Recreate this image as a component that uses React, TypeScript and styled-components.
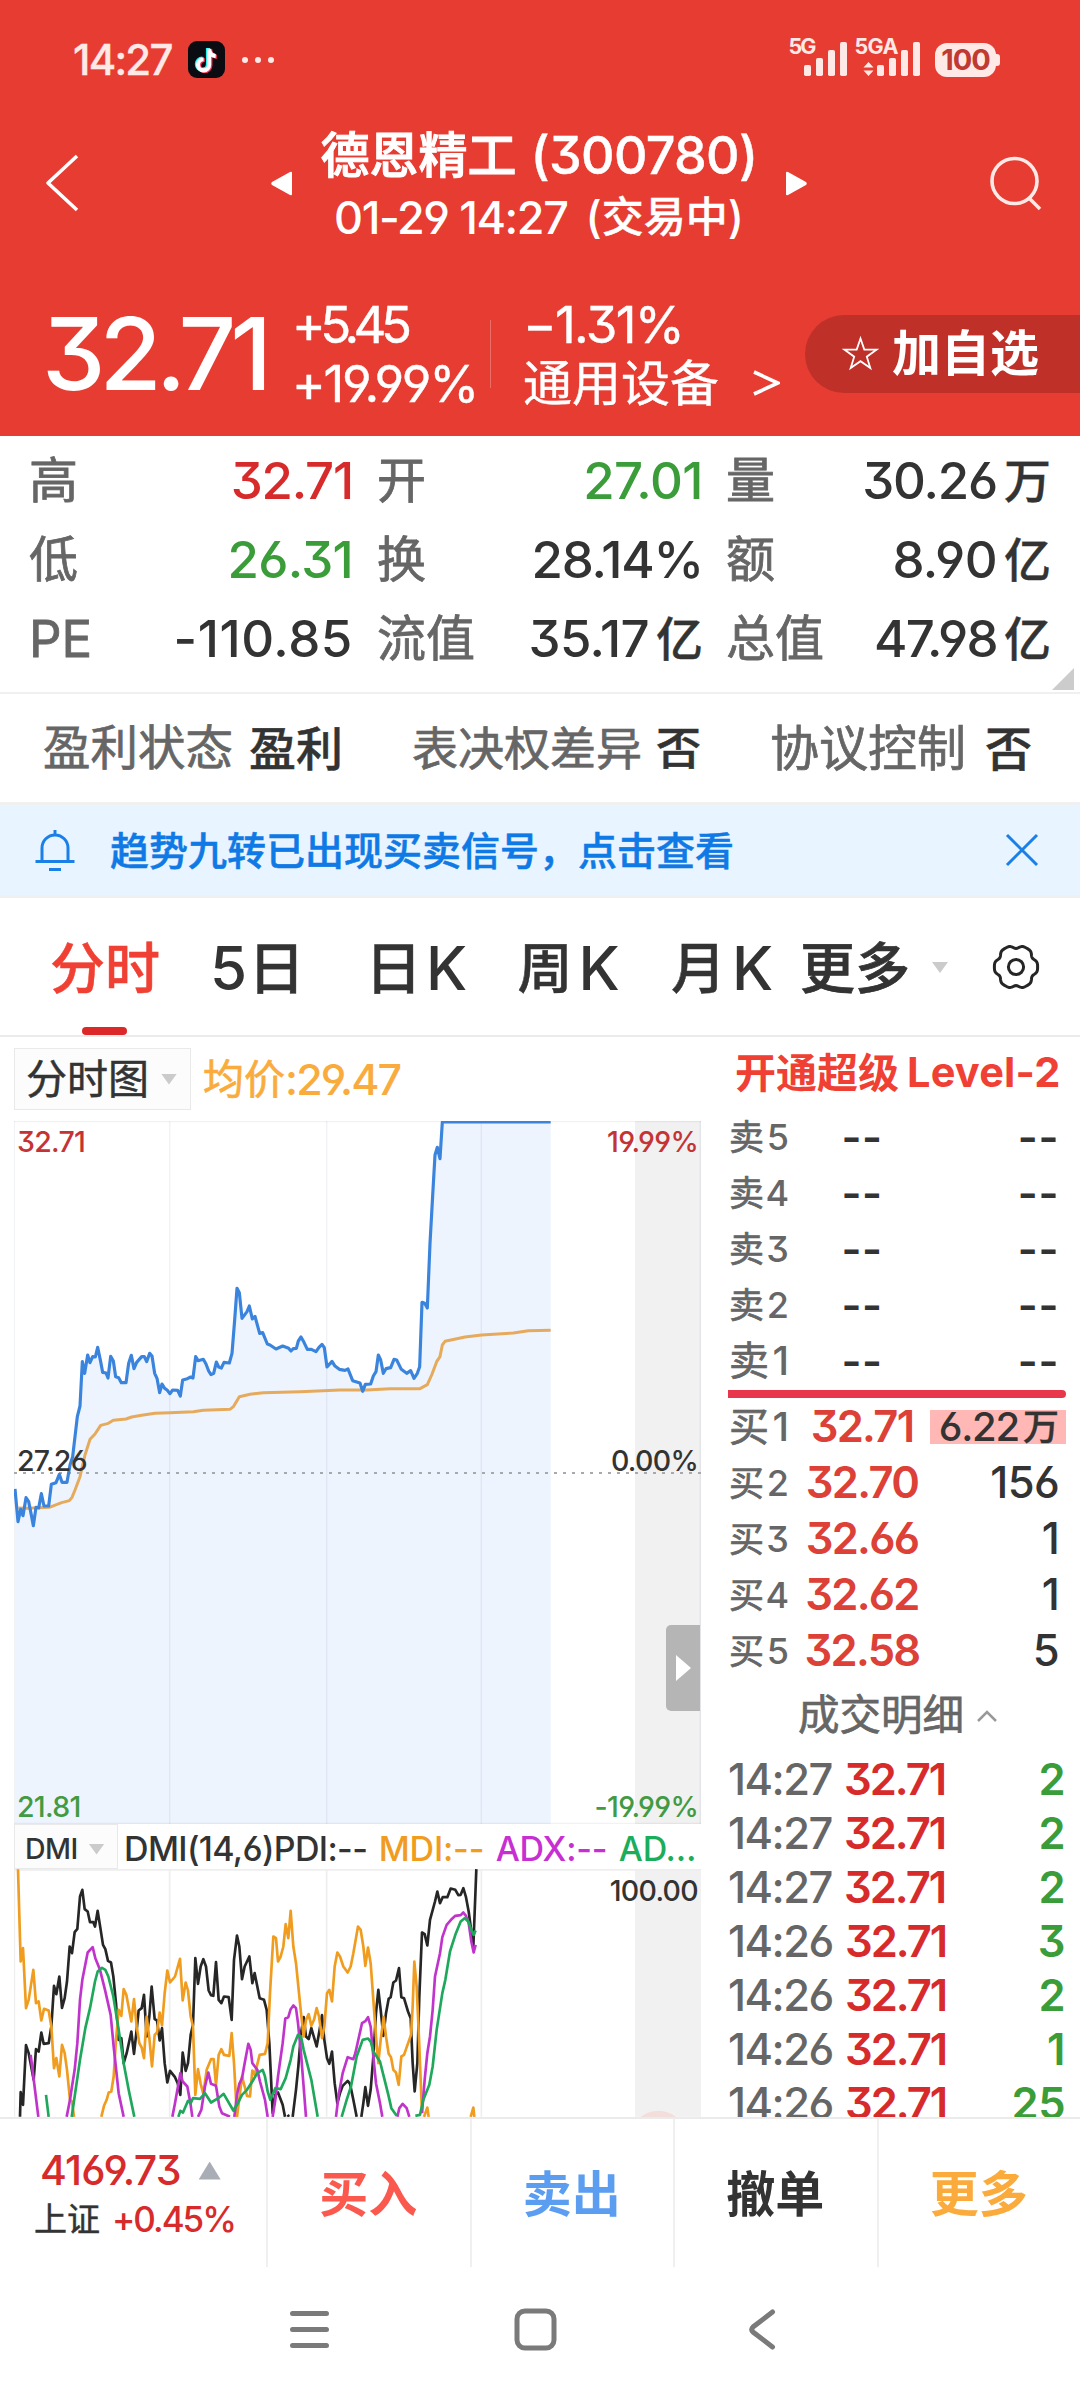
import React from 'react';
import styled, { createGlobalStyle } from 'styled-components';

const RED = '#d72b2b';
const GREEN = '#3a9d3a';
const DARK = '#333333';
const GRAY = '#666666';

const GlobalStyle = createGlobalStyle`
  html, body { margin: 0; padding: 0; background: #ffffff; }
  body {
    font-family: Inter, 'Noto Sans CJK SC', sans-serif;
    font-feature-settings: 'cv03', 'cv04', 'cv09', 'calt' 0;
  }
  * { box-sizing: border-box; }
  svg { display: block; flex: none; }
`;

const Screen = styled.div`
  width: 1080px;
  height: 2400px;
  display: flex;
  flex-direction: column;
  overflow: hidden;
  background: #ffffff;
  color: ${DARK};
`;

/* One run of text; size, weight, colour, tracking and extra stroke vary per use. */
const Label = styled.span<{ $s: number; $w?: number; $c?: string; $ls?: number; $ml?: number; $st?: number }>`
  flex: none;
  white-space: pre;
  line-height: 1;
  font-size: ${(p) => p.$s}px;
  font-weight: ${(p) => p.$w ?? 400};
  color: ${(p) => p.$c ?? 'inherit'};
  letter-spacing: ${(p) => p.$ls ?? 0}px;
  margin-left: ${(p) => p.$ml ?? 0}px;
  -webkit-text-stroke: ${(p) => p.$st ?? 0}px currentColor;
`;

const Spacer = styled.div`
  flex: 1;
`;

/* ---------- header ---------- */
const Header = styled.header`
  height: 436px;
  flex: none;
  display: flex;
  flex-direction: column;
  background: #e63c32;
  color: #ffffff;
`;

const StatusBar = styled.div`
  height: 119px;
  display: flex;
  align-items: center;
  padding: 0 84px 0 73px;
  color: #ffe9e7;
`;

const AppBadge = styled.div`
  width: 37px;
  height: 37px;
  margin-left: 16px;
  border-radius: 9px;
  background: #0b0b12;
  display: flex;
  align-items: center;
  justify-content: center;
`;

const Dots = styled.div`
  display: flex;
  gap: 7px;
  margin-left: 17px;
  i { width: 6px; height: 6px; border-radius: 50%; background: currentColor; }
`;

const Battery = styled.div`
  position: relative;
  width: 61px;
  height: 34px;
  margin-left: 14px;
  border-radius: 12px;
  background: #ffe9e7;
  display: flex;
  align-items: center;
  justify-content: center;
  &::after {
    content: '';
    position: absolute;
    right: -4px;
    top: 11px;
    width: 5px;
    height: 12px;
    border-radius: 0 3px 3px 0;
    background: #ffe9e7;
  }
`;

const TitleBar = styled.div`
  height: 128px;
  display: flex;
  align-items: center;
  padding: 0 37px 0 44px;
`;

const TitleGroup = styled.div`
  display: flex;
  align-items: center;
  gap: 30px;
  margin: 0 auto 0 191px;
`;

const TitleLines = styled.div`
  width: 434px;
  display: flex;
  flex-direction: column;
  align-items: center;
  gap: 13px;
  padding-top: 3px;
`;

const Line = styled.div`
  display: flex;
  align-items: center;
`;

const QuoteBar = styled.div`
  height: 189px;
  display: flex;
  align-items: center;
  padding: 24px 0 0 42px;
`;

const QuoteCol = styled.div<{ $w: number; $ml: number }>`
  width: ${(p) => p.$w}px;
  margin-left: ${(p) => p.$ml}px;
  display: flex;
  flex-direction: column;
  gap: 7px;
  flex: none;
`;

const QuotePrice = styled.div`
  width: 250px;
  flex: none;
  display: flex;
`;

const QuoteRow = styled.div`
  height: 52px;
  display: flex;
  align-items: center;
`;

const QuoteDivider = styled.div`
  width: 1px;
  height: 68px;
  background: rgba(255, 255, 255, 0.25);
`;

const AddButton = styled.div`
  width: 275px;
  height: 78px;
  flex: none;
  margin-left: auto;
  display: flex;
  align-items: center;
  padding-left: 37px;
  border-radius: 39px 0 0 39px;
  background: #bf3029;
`;

/* ---------- statistics ---------- */
const Stats = styled.section`
  position: relative;
  height: 258px;
  flex: none;
  display: grid;
  grid-template-columns: 324px 350px 348px;
  column-gap: 0;
  grid-auto-rows: 79px;
  padding: 5px 29px 0;
  border-bottom: 2px solid #f0f0f0;
`;

const Stat = styled.div<{ $pl: number }>`
  display: flex;
  align-items: center;
  justify-content: space-between;
  padding-left: ${(p) => p.$pl}px;
`;

const Corner = styled.div`
  position: absolute;
  right: 6px;
  bottom: 2px;
  border-left: 22px solid transparent;
  border-bottom: 22px solid #cccccc;
`;

const InfoRow = styled.section`
  height: 108px;
  flex: none;
  display: flex;
  align-items: center;
  justify-content: space-between;
  padding: 0 48px 0 43px;
`;

const Banner = styled.section`
  height: 96px;
  flex: none;
  display: flex;
  align-items: center;
  padding: 0 41px 0 33px;
  background: #e8f4ff;
  border-top: 3px solid #f0f0f0;
  border-bottom: 3px solid #f0f0f0;
`;

/* ---------- tabs ---------- */
const Tabs = styled.nav`
  height: 139px;
  flex: none;
  display: flex;
  align-items: center;
  padding-left: 50px;
  border-bottom: 2px solid #ebebeb;
`;

const Tab = styled.div<{ $w: number; $ml: number; $active?: boolean }>`
  position: relative;
  height: 100%;
  width: ${(p) => p.$w}px;
  margin-left: ${(p) => p.$ml}px;
  padding-top: 3px;
  flex: none;
  display: flex;
  align-items: center;
  justify-content: center;
  color: ${(p) => (p.$active ? '#f04034' : DARK)};
  &::after {
    content: '';
    display: ${(p) => (p.$active ? 'block' : 'none')};
    position: absolute;
    left: 32px;
    bottom: 0;
    width: 45px;
    height: 8px;
    border-radius: 4px;
    background: #dc2828;
  }
`;

const Caret = styled.i<{ $w: number; $h: number; $ml: number; $mt?: number }>`
  flex: none;
  width: ${(p) => p.$w}px;
  height: ${(p) => p.$h}px;
  margin-left: ${(p) => p.$ml}px;
  margin-top: ${(p) => p.$mt ?? 0}px;
  background: #cbcbcb;
  clip-path: polygon(0 0, 100% 0, 50% 100%);
`;

const CaretUp = styled(Caret)`
  background: #a9adb5;
  clip-path: polygon(0 100%, 100% 100%, 50% 0);
`;

/* ---------- main area ---------- */
const Main = styled.main`
  height: 1080px;
  flex: none;
  display: flex;
  overflow: hidden;
`;

const ChartColumn = styled.section`
  width: 701px;
  flex: none;
  padding-left: 14px;
  display: flex;
  flex-direction: column;
`;

const ChartToolbar = styled.div`
  height: 84px;
  flex: none;
  display: flex;
  align-items: center;
`;

const SelectBox = styled.div<{ $w: number; $h: number; $pl: number; $pt?: number }>`
  width: ${(p) => p.$w}px;
  height: ${(p) => p.$h}px;
  padding-left: ${(p) => p.$pl}px;
  padding-top: ${(p) => p.$pt ?? 0}px;
  flex: none;
  display: flex;
  align-items: center;
  background: #fcfcfc;
  border: 1px solid #e9e9e9;
`;

const ChartBox = styled.div<{ $h: number }>`
  position: relative;
  width: 687px;
  height: ${(p) => p.$h}px;
  flex: none;
`;

const AxisLabel = styled.span<{ $c: string; $top: number; $side: 'left' | 'right' }>`
  position: absolute;
  top: ${(p) => p.$top}px;
  ${(p) => p.$side}: 3px;
  line-height: 28px;
  font-size: 28.5px;
  font-weight: 550;
  letter-spacing: -0.7px;
  color: ${(p) => p.$c};
`;

const Handle = styled.div`
  position: absolute;
  right: 1px;
  top: 504px;
  width: 34px;
  height: 86px;
  border-radius: 5px 0 0 5px;
  background: #b5b5b5;
  display: flex;
  align-items: center;
  justify-content: center;
  &::before {
    content: '';
    border-left: 15px solid #ffffff;
    border-top: 13px solid transparent;
    border-bottom: 13px solid transparent;
  }
`;

const IndicatorBar = styled.div`
  height: 45px;
  flex: none;
  display: flex;
  align-items: center;
`;

const IndicatorValues = styled.div`
  display: flex;
  gap: 11.5px;
  padding: 5px 0 0 6px;
`;

const BookColumn = styled.section`
  width: 379px;
  flex: none;
  display: flex;
  flex-direction: column;
  padding: 0 14px 0 27px;
`;

const BookTitle = styled.div<{ $h: number; $pl: number }>`
  height: ${(p) => p.$h}px;
  padding-left: ${(p) => p.$pl}px;
  flex: none;
  display: flex;
  align-items: center;
`;

const BookRow = styled.div`
  height: 56px;
  flex: none;
  display: grid;
  grid-template-columns: 64px 140px 1fr;
  align-items: center;
`;

const Side = styled.div`
  display: flex;
  align-items: center;
  justify-content: space-between;
  padding-left: 1px;
  width: 61px;
`;

const PriceCell = styled.div`
  display: flex;
  justify-content: center;
`;

const QtyCell = styled.div<{ $hot?: boolean }>`
  height: 34px;
  display: flex;
  align-items: center;
  justify-content: flex-end;
  padding-right: 7px;
  margin-left: -2px;
  background: ${(p) => (p.$hot ? '#ffb8b5' : 'transparent')};
`;

const BookRule = styled.div`
  height: 8px;
  margin: 1px 0;
  flex: none;
  border-radius: 0 4px 4px 0;
  background: #e8364a;
`;

const TradeRow = styled.div`
  height: 54px;
  flex: none;
  display: flex;
  align-items: center;
  padding: 0 1px 0 0;
`;

/* ---------- bottom ---------- */
const ActionBar = styled.footer`
  height: 150px;
  flex: none;
  display: flex;
  border-top: 2px solid #ebebeb;
`;

const IndexCell = styled.div`
  width: 266px;
  flex: none;
  display: flex;
  flex-direction: column;
  gap: 11px;
  padding: 31px 0 0 34px;
`;

const Action = styled.div`
  flex: 1;
  display: flex;
  align-items: center;
  justify-content: center;
  padding: 3px 1px 0 0;
  border-left: 2px solid #f0f0f0;
`;

const SystemNav = styled.div`
  flex: 1;
  display: flex;
  align-items: flex-start;
  padding: 40px 0 0 288px;
`;

/* ---------- chart data ---------- */
const PRICE =
  '45,1167 54,1265 62,1228 69,1247 78,1193 86,1205 93,1240 100,1277 108,1222 116,1224 124,1181 132,1218 146,1218 154,1153 168,1148 178,1123 186,1147 201,1147 210,1095 218,1070 232,950 240,918 247,785 254,820 263,765 270,788 278,770 286,771 293,742 302,785 308,817 318,819 324,834 332,769 340,783 347,830 356,833 364,848 378,848 386,790 394,766 402,806 410,787 425,770 433,770 440,785 449,760 456,768 464,820 471,835 479,878 486,852 494,865 502,871 510,881 518,870 533,871 541,888 548,840 562,836 572,831 579,834 587,770 594,782 610,778 618,792 626,813 633,824 641,820 649,786 656,801 664,804 672,787 688,789 696,760 704,660 711,565 718,578 726,655 741,635 748,618 757,657 765,649 779,700 788,698 802,732 810,735 828,747 848,738 866,745 873,753 880,746 889,745 895,723 903,711 912,727 922,748 934,748 948,755 957,742 966,733 973,743 981,801 996,784 1004,797 1018,808 1035,811 1044,807 1058,842 1080,849 1088,874 1096,853 1112,852 1120,828 1128,815 1135,765 1142,780 1150,820 1158,806 1172,803 1182,778 1190,780 1204,808 1220,820 1232,812 1242,835 1252,820 1259,800 1266,607 1274,610 1282,624 1290,430 1298,287 1305,165 1312,142 1320,176 1327,66 1652,66';

const AVERAGE =
  '55,1224 80,1225 100,1224 148,1222 185,1208 208,1202 216,1192 225,1170 240,1130 255,1065 270,1018 285,1002 302,976 325,970 340,961 378,957 395,951 425,946 465,940 510,938 580,935 610,931 690,928 700,920 718,890 750,883 790,878 900,875 1020,870 1100,870 1170,866 1260,866 1282,854 1295,825 1310,785 1320,770 1327,735 1335,724 1395,711 1445,705 1540,699 1585,692 1652,691';

const PDI = [
  '60,1011 62,937 69,975 78,796 86,820 101,900 108,808 116,815 124,758 131,792 146,790 154,740 162,618 169,643 178,590 186,684 194,655 201,605 209,500 216,520 224,457 232,447 240,350 247,330 254,388 263,395 270,427 280,427 285,440 293,393 302,450 309,495 316,508 324,543 333,548 340,590 348,670 356,780 364,775 371,850 380,820 394,755 402,822 410,750 416,692 425,685 432,645 440,770 448,710 455,620 464,718 471,722 479,782 486,745 494,850 502,908 510,873 525,892 533,910 541,945 548,818 557,873 564,850 572,765 579,735 586,535 594,612 602,560 610,538 618,560 626,632 633,646 640,648 648,547 656,660 664,670 672,650 686,652 695,720 702,540 711,467 718,500 726,598 734,560 748,530 757,610 764,580 779,655 792,660 800,690 808,790 818,1000 826,945 834,938 848,975 855,1011',
  '863,1005 867,1011',
  '878,1011 888,930 895,860 903,760 911,712 918,770 926,778 934,745 950,800 957,760 966,706 973,780 981,835 988,852 996,815 1004,910 1012,970 1020,940 1028,918 1043,903 1050,912 1060,960 1070,1011',
  '1084,1011 1090,970 1096,922 1104,978 1112,930 1120,830 1128,700 1135,630 1142,690 1150,768 1158,700 1166,657 1172,652 1180,608 1188,602 1197,565 1204,652 1212,655 1224,695 1232,715 1238,850 1244,935 1252,850 1258,650 1266,458 1274,463 1282,497 1290,420 1305,365 1312,335 1320,370 1328,352 1342,352 1352,326 1366,330 1375,346 1382,345 1390,325 1398,352 1406,395 1412,440 1420,500 1429,268',
];

const MDI = [
  '54,268 62,545 69,505 78,685 86,660 100,570 108,670 116,665 124,722 132,687 146,692 154,740 162,865 169,835 178,890 186,795 194,820 201,870 210,960 216,965 222,1011',
  '304,1011 312,978 320,960 326,938 334,935 341,890 348,780 356,690 364,708 371,628 379,645 394,725 402,658 410,740 418,790 425,803 432,835 440,710 448,775 456,860 464,765 471,758 479,698 486,737 494,640 502,572 510,608 525,590 540,537 548,662 557,608 564,632 572,710 579,740 586,945 594,868 602,912 610,942 620,870 633,838 641,838 648,915 656,825 664,808 672,825 688,828 695,760 702,850 711,1011 718,955 726,890 734,920 741,948 750,950 757,872 764,885 779,825 795,822 803,790 810,640 820,470 828,475 834,545 842,530 850,500 857,433 865,475 872,393 880,500 888,550 903,700 911,770 918,720 926,703 934,738 942,720 950,685 957,710 966,775 973,740 981,640 988,630 996,665 1004,560 1012,518 1020,530 1030,560 1043,578 1052,560 1060,520 1074,440 1082,450 1090,500 1096,558 1104,503 1112,550 1120,660 1128,770 1135,850 1142,780 1151,712 1158,770 1166,822 1173,832 1180,870 1188,878 1196,915 1204,830 1212,825 1233,765 1238,680 1243,545 1250,620 1258,800 1266,1000',
  '1272,1011 1282,983 1286,1011',
  '1412,1011 1420,983 1423,1011',
];

const ADX = [
  '92,825 100,890 115,1011',
  '200,1011 210,960 216,920 224,870 232,790 240,660 247,600 263,518 278,502 286,535 300,570 315,630 332,705 341,800 356,940 371,1011',
  '517,1011 525,970 541,880 548,905 562,920 572,975 577,1011',
  '594,1011 604,990 615,920 625,878 633,912 648,918 658,980 666,1000 690,1011',
  '703,1011 711,945 718,912 726,895 734,850 745,792 752,810 757,850 772,870 780,905 795,960 803,1011',
  '818,1011 826,960 834,890 848,790 856,716 865,712 872,688 880,677 888,685 894,730 903,820 918,1011',
  '1008,1011 1016,945 1028,880 1043,832 1060,838 1066,820 1086,730 1096,724 1104,712 1112,740 1120,830 1128,910 1140,970 1147,1011',
  '1192,1011 1198,985 1208,972 1220,985 1228,1011',
  '1266,1000 1274,900 1282,820 1290,770 1298,690 1305,590 1320,520 1327,472 1340,435 1353,420 1366,408 1382,406 1390,398 1398,408 1406,430 1414,485 1421,518 1427,495',
];

const ADXR = [
  '138,945 146,1011',
  '215,1011 224,950 240,840 256,745 270,685 285,605 293,575 306,564 316,570 325,590 340,650 356,750 371,850 386,930 403,1011',
  '535,1011 541,993 549,998 564,963 572,970 579,955 600,957 615,940 633,968 655,955 671,942 700,992 711,975 726,945 741,930 757,905 772,880 788,870 795,890 803,935 811,960 826,925 842,928 857,895 872,840 880,800 894,765 903,770 911,810 934,900 953,1011',
  '1025,1011 1040,960 1053,920 1070,830 1088,780 1104,776 1112,785 1120,815 1140,845 1150,885 1165,945 1174,985 1190,1008',
  '1246,1008 1260,1005 1270,960 1288,915 1298,860 1310,750 1327,640 1336,600 1350,515 1366,465 1382,425 1394,415 1405,425 1414,450 1421,465 1427,452',
];

const GRID_X = [509, 980, 1444];

const Series: React.FC<{ runs: string[]; color: string }> = ({ runs, color }) => (
  <g fill="none" stroke={color} strokeWidth={8} strokeLinejoin="round">
    {runs.map((points) => (
      <polyline key={points} points={points} />
    ))}
  </g>
);

const PriceChart: React.FC = () => (
  <svg width="687" height="703" viewBox="42 63 2061 2109">
    <rect x="1905" y="63" width="198" height="2109" fill="#f1f1f1" />
    <polygon points={`45,2172 ${PRICE} 1652,2172`} fill="#edf4fe" />
    <g stroke="#0a1e50" strokeOpacity="0.06" strokeWidth="4">
      {GRID_X.map((x) => (
        <line key={x} x1={x} x2={x} y1="63" y2="2172" />
      ))}
      <line x1="43" x2="43" y1="63" y2="2172" />
      <line x1="2101" x2="2101" y1="63" y2="2172" />
      <line x1="42" x2="2103" y1="65" y2="65" />
      <line x1="42" x2="2103" y1="2170" y2="2170" />
    </g>
    <line x1="42" x2="2103" y1="1119" y2="1119" stroke="#a6a9ae" strokeWidth="6" strokeDasharray="9 18" />
    <polyline points={AVERAGE} fill="none" stroke="#e6aa5c" strokeWidth="9" strokeLinejoin="round" />
    <polyline points={PRICE} fill="none" stroke="#3a84dd" strokeWidth="9.5" strokeLinejoin="round" />
  </svg>
);

const DmiChart: React.FC = () => (
  <svg width="687" height="248" viewBox="42 268 2061 743">
    <rect x="1905" y="268" width="198" height="743" fill="#f1f1f1" />
    <g stroke="#eeeeef" strokeWidth="5">
      {GRID_X.map((x) => (
        <line key={x} x1={x} x2={x} y1="268" y2="1011" />
      ))}
      <line x1="43" x2="43" y1="268" y2="1011" />
      <line x1="42" x2="2103" y1="270" y2="270" />
    </g>
    <ellipse cx="1975" cy="1055" rx="76" ry="62" fill="#f3dedc" />
    <Series runs={PDI} color="#262626" />
    <Series runs={MDI} color="#f09c1e" />
    <Series runs={ADX} color="#c034cc" />
    <Series runs={ADXR} color="#1fa85c" />
  </svg>
);

/* Six soft lobes around the hub. */
const gearOutline = Array.from({ length: 120 }, (_, i) => {
  const t = (i / 120) * Math.PI * 2;
  const r = 20.6 + 1.5 * Math.cos(6 * t) - 0.5 * Math.cos(12 * t);
  return `${(24 + r * Math.cos(t)).toFixed(2)},${(24 + r * Math.sin(t)).toFixed(2)}`;
}).join(' ');

const Gear = styled.svg`
  margin-left: 44px;
`;

const GearIcon: React.FC = () => (
  <Gear width="48" height="48" viewBox="0 0 48 48" fill="none" stroke="#262626" strokeWidth="3">
    <polygon points={gearOutline} strokeLinejoin="round" />
    <circle cx="24" cy="24" r="7.6" />
  </Gear>
);

const ArrowRight = styled.svg`
  margin-left: 34px;
`;

const ChevronUp = styled.svg`
  margin-left: 13px;
`;

const NOTE = 'M13.2 3v13.4a4.6 4.6 0 1 1-4.6-4.6M13.2 4c.4 3 2.4 5 5.4 5.2';

const SignalIcons: React.FC = () => (
  <svg width="133" height="69" viewBox="789 25 133 69" fill="#ffe9e7" fontFamily="Inter" fontWeight="700" fontSize="21.500">
    <text x="789.500" y="53.5" textLength="28">5G</text>
    <text x="855.500" y="53.5" textLength="44">5GA</text>
    {[65, 58, 50, 42].map((y, i) => (
      <rect key={y} x={805 + i * 12} y={y} width="7" height={76 - y} rx="1.8" />
    ))}
    {[65, 58, 50, 42].map((y, i) => (
      <rect key={y} x={878 + i * 12} y={y} width="7" height={76 - y} rx="1.8" />
    ))}
    <path d="M864.500 67.500 L869.500 62 L874.500 67.500z M864.500 70.500 L869.500 76 L874.500 70.500z" />
  </svg>
);

/* ---------- table data ---------- */
type StatItem = { label: string; value: string; unit?: string; color?: string; ls?: number };

const STATS: StatItem[] = [
  { label: '高', value: '32.71', color: RED },
  { label: '开', value: '27.01', color: GREEN, ls: -0.5 },
  { label: '量', value: '30.26', unit: '万' },
  { label: '低', value: '26.31', color: GREEN, ls: -0.7 },
  { label: '换', value: '28.14%' },
  { label: '额', value: '8.90', unit: '亿', ls: -0.6 },
  { label: 'PE', value: '-110.85', ls: 0.6 },
  { label: '流值', value: '35.17', unit: '亿', ls: -0.6 },
  { label: '总值', value: '47.98', unit: '亿', ls: -1.7 },
];

const SELLS = [5, 4, 3, 2, 1];
const BUYS: [number, string, string, string?][] = [
  [1, '32.71', '6.22', '万'],
  [2, '32.70', '156'],
  [3, '32.66', '1'],
  [4, '32.62', '1'],
  [5, '32.58', '5'],
];
const TRADES: [string, string][] = [
  ['14:27', '2'],
  ['14:27', '2'],
  ['14:27', '2'],
  ['14:26', '3'],
  ['14:26', '2'],
  ['14:26', '1'],
  ['14:26', '25'],
];

const SideLabel: React.FC<{ text: string; level: number }> = ({ text, level }) => (
  <Side>
    <Label $s={level === 1 ? 40 : 35} $c={GRAY} $st={0.7}>{text}</Label>
    <Label $s={level === 1 ? 40 : 36} $c={GRAY} $w={500}>{level}</Label>
  </Side>
);

export default function App() {
  return (
    <Screen>
      <GlobalStyle />
      <Header>
        <StatusBar>
          <Label $s={42} $w={500} $ls={-1.8} $st={0.3}>14:27</Label>
          <AppBadge>
            <svg width="27" height="29" viewBox="0 0 22 24" fill="none" strokeWidth="3.4">
              <path d={NOTE} stroke="#25f4ee" transform="translate(-1 -0.6)" />
              <path d={NOTE} stroke="#fe2c55" transform="translate(1 0.6)" />
              <path d={NOTE} stroke="#ffffff" />
            </svg>
          </AppBadge>
          <Dots><i /><i /><i /></Dots>
          <Spacer />
          <SignalIcons />
          <Battery>
            <Label $s={29} $w={700} $c="#bf3a33" $ls={-1}>100</Label>
          </Battery>
        </StatusBar>

        <TitleBar>
          <svg width="36" height="60" viewBox="0 0 36 60" fill="none" stroke="#fff" strokeWidth="3.6">
            <path d="M33 3 L4 30 L33 57" strokeLinejoin="round" />
          </svg>
          <TitleGroup>
            <svg width="21" height="25" viewBox="0 0 21 25" fill="#fff"><path d="M21 2v21q0 2-2 1L1 14q-1.500-1.500 0-3L19 1q2-1 2 1z" /></svg>
            <TitleLines>
              <Line>
                <Label $s={49} $w={500} $st={1}>德恩精工</Label>
                <Label $s={52} $w={500} $ls={-0.7} $ml={14} $st={0.4}>(300780)</Label>
              </Line>
              <Line>
                <Label $s={45} $w={500} $ls={-1.4}>01-29 14:27</Label>
                <Label $s={44} $w={450} $ml={18}>(</Label>
                <Label $s={42} $w={450} $st={0.4}>交易中</Label>
                <Label $s={44} $w={450}>)</Label>
              </Line>
            </TitleLines>
            <svg width="21" height="25" viewBox="0 0 21 25" fill="#fff"><path d="M0 2v21q0 2 2 1L20 14q1.500-1.500 0-3L2 1q-2-1-2 1z" /></svg>
          </TitleGroup>
          <svg width="54" height="56" viewBox="0 0 54 56" fill="none" stroke="#ffe9e7" strokeWidth="3.6">
            <circle cx="25.500" cy="26" r="22.500" />
            <path d="M40 43 L51 54" />
          </svg>
        </TitleBar>

        <QuoteBar>
          <QuotePrice><Label $s={101} $w={470} $ls={-6}>32.71</Label></QuotePrice>
          <QuoteCol $w={198} $ml={0}>
            <QuoteRow><Label $s={51} $ls={-5.500} $st={0.4}>+5.45</Label></QuoteRow>
            <QuoteRow><Label $s={51} $ls={-2.2} $st={0.4}>+19.99%</Label></QuoteRow>
          </QuoteCol>
          <QuoteDivider />
          <QuoteCol $w={240} $ml={32}>
            <QuoteRow><Label $s={51} $ls={-1.700} $st={0.4}>−1.31%</Label></QuoteRow>
            <QuoteRow>
              <Label $s={49} $st={0.4}>通用设备</Label>
              <ArrowRight width="27" height="26" viewBox="0 0 27 26" fill="none" stroke="#fff" strokeWidth="3.600">
                <path d="M1 2 L25 13 L1 24" />
              </ArrowRight>
            </QuoteRow>
          </QuoteCol>
          <AddButton>
            <svg width="37" height="36" viewBox="0 0 37 36" fill="none" stroke="#fff" strokeWidth="1.8">
              <path d="M18.500 2.500 L22.300 13.500 L34.500 13.700 L24.800 20.700 L28.300 32 L18.500 25.200 L8.700 32 L12.200 20.700 L2.500 13.700 L14.700 13.500z" />
            </svg>
            <Label $s={49} $w={700} $ml={13}>加自选</Label>
          </AddButton>
        </QuoteBar>
      </Header>

      <Stats>
        {STATS.map((s, i) => (
          <Stat key={s.label} $pl={[0, 24, 23][i % 3]}>
            <Label $s={s.label === 'PE' ? 51 : 49} $c={GRAY} $st={0.8}>{s.label}</Label>
            <Line>
              <Label $s={51} $w={530} $c={s.color ?? DARK} $ls={s.ls ?? -1.2}>{s.value}</Label>
              {s.unit && <Label $s={47} $w={450} $ml={7} $st={0.4}>{s.unit}</Label>}
            </Line>
          </Stat>
        ))}
        <Corner />
      </Stats>

      <InfoRow>
        <Line>
          <Label $s={47.500} $c={GRAY} $st={0.7}>盈利状态</Label>
          <Label $s={47} $w={500} $ml={16} $st={0.5}>盈利</Label>
        </Line>
        <Line>
          <Label $s={46} $c={GRAY} $st={0.7}>表决权差异</Label>
          <Label $s={45} $w={500} $ml={14} $st={0.5}>否</Label>
        </Line>
        <Line>
          <Label $s={49} $c={GRAY} $st={0.7}>协议控制</Label>
          <Label $s={47} $w={500} $ml={19} $st={0.5}>否</Label>
        </Line>
      </InfoRow>

      <Banner>
        <svg width="44" height="44" viewBox="0 0 44 44" fill="none" stroke="#1a7fe6" strokeWidth="3">
          <path d="M22 2v5M9 33V20a13 13 0 0 1 26 0v13M2.500 33.500h39M16 41.500h12" />
        </svg>
        <Label $s={39} $w={500} $c="#0f7ae5" $ml={33} $st={0.5}>趋势九转已出现买卖信号，点击查看</Label>
        <Spacer />
        <svg width="34" height="34" viewBox="0 0 34 34" fill="none" stroke="#1a7fe6" strokeWidth="3">
          <path d="M2 2 L32 32 M32 2 L2 32" />
        </svg>
      </Banner>

      <Tabs>
        <Tab $w={110} $ml={0} $active><Label $s={55} $w={500} $st={0.5}>分时</Label></Tab>
        <Tab $w={87} $ml={54}><Label $s={60} $w={530} $ls={-1}>5</Label><Label $s={57} $w={500} $ml={2} $st={0.4}>日</Label></Tab>
        <Tab $w={94} $ml={68}><Label $s={57} $w={500} $st={0.4}>日</Label><Label $s={60} $w={530} $ml={4}>K</Label></Tab>
        <Tab $w={101} $ml={55}><Label $s={55} $w={500} $st={0.5}>周</Label><Label $s={60} $w={530} $ml={6}>K</Label></Tab>
        <Tab $w={98} $ml={54}><Label $s={55} $w={500} $st={0.5}>月</Label><Label $s={60} $w={530} $ml={6}>K</Label></Tab>
        <Tab $w={108} $ml={30}><Label $s={55} $w={500} $st={0.7}>更多</Label></Tab>
        <Caret $w={16} $h={11} $ml={23} $mt={2} />
        <GearIcon />
      </Tabs>

      <Main>
        <ChartColumn>
          <ChartToolbar>
            <SelectBox $w={177} $h={62} $pl={11}>
              <Label $s={41} $st={0.5}>分时图</Label>
              <Caret $w={16} $h={11} $ml={12} />
            </SelectBox>
            <Label $s={41} $c="#f9ac3d" $ml={12} $st={0.7}>均价</Label>
            <Label $s={43} $w={480} $c="#f9ac3d" $ls={-1.9}>:29.47</Label>
          </ChartToolbar>
          <ChartBox $h={703}>
            <PriceChart />
            <AxisLabel $c="#c43434" $top={7} $side="left">32.71</AxisLabel>
            <AxisLabel $c={DARK} $top={326} $side="left">27.26</AxisLabel>
            <AxisLabel $c="#429a42" $top={672} $side="left">21.81</AxisLabel>
            <AxisLabel $c="#c43434" $top={7} $side="right">19.99%</AxisLabel>
            <AxisLabel $c={DARK} $top={326} $side="right">0.00%</AxisLabel>
            <AxisLabel $c="#429a42" $top={672} $side="right">-19.99%</AxisLabel>
            <Handle />
          </ChartBox>
          <IndicatorBar>
            <SelectBox $w={104} $h={45} $pl={10} $pt={5}>
              <Label $s={28.500} $ls={-0.6} $w={450}>DMI</Label>
              <Caret $w={16} $h={11} $ml={11} />
            </SelectBox>
            <IndicatorValues>
              <Label $s={34} $w={530} $ls={-0.65}>DMI(14,6)PDI:--</Label>
              <Label $s={34} $w={530} $ls={-0.2} $c="#f09c1e">MDI:--</Label>
              <Label $s={34} $w={530} $ls={-0.2} $c="#c82fd2">ADX:--</Label>
              <Label $s={34} $w={530} $ls={-0.2} $c="#1aad5c">AD…</Label>
            </IndicatorValues>
          </IndicatorBar>
          <ChartBox $h={248}>
            <DmiChart />
            <AxisLabel $c={DARK} $top={8} $side="right">100.00</AxisLabel>
          </ChartBox>
        </ChartColumn>

        <BookColumn>
          <BookTitle $h={72} $pl={7}>
            <Label $s={41} $w={700} $c="#f04034">开通超级</Label>
            <Label $s={41.500} $w={650} $c="#f04034" $ls={0.2} $ml={8}>Level-2</Label>
          </BookTitle>
          {SELLS.map((level) => (
            <BookRow key={level}>
              <SideLabel text="卖" level={level} />
              <PriceCell><Label $s={43} $w={600} $ls={0.600}>--</Label></PriceCell>
              <QtyCell><Label $s={43} $w={600} $ls={0.600}>--</Label></QtyCell>
            </BookRow>
          ))}
          <BookRule />
          {BUYS.map(([level, price, qty, unit]) => (
            <BookRow key={level}>
              <SideLabel text="买" level={level} />
              <PriceCell><Label $s={43.500} $w={560} $c="#dc4036" $ls={-1.700}>{price}</Label></PriceCell>
              <QtyCell $hot={level === 1}>
                <Label $s={unit ? 40 : 43.500} $w={550} $ls={unit ? -1.2 : -0.7}>{qty}</Label>
                {unit && <Label $s={36} $w={450} $ml={4} $st={0.4}>{unit}</Label>}
              </QtyCell>
            </BookRow>
          ))}
          <BookTitle $h={74} $pl={70}>
            <Label $s={41.500} $c={GRAY} $st={0.7}>成交明细</Label>
            <ChevronUp width="20" height="12" viewBox="0 0 20 12" fill="none" stroke="#999" strokeWidth="2.500">
              <path d="M1 11 L10 2 L19 11" />
            </ChevronUp>
          </BookTitle>
          {TRADES.map(([time, qty], i) => (
            <TradeRow key={i}>
              <Label $s={43.500} $w={550} $c={GRAY} $ls={-1.500}>{time}</Label>
              <Label $s={43.500} $w={570} $c={RED} $ls={-2} $ml={12}>32.71</Label>
              <Spacer />
              <Label $s={43.500} $w={570} $c={GREEN} $ls={-0.5}>{qty}</Label>
            </TradeRow>
          ))}
        </BookColumn>
      </Main>

      <ActionBar>
        <IndexCell>
          <Line>
            <Label $s={41} $w={530} $c={RED} $ls={-0.8} $ml={6}>4169.73</Label>
            <CaretUp $w={22} $h={18} $ml={18} />
          </Line>
          <Line>
            <Label $s={33} $st={0.5}>上证</Label>
            <Label $s={35} $w={480} $c={RED} $ls={-2} $ml={12}>+0.45%</Label>
          </Line>
        </IndexCell>
        <Action><Label $s={49} $w={700} $c="#fb584e">买入</Label></Action>
        <Action><Label $s={49} $w={700} $c="#5b9df0">卖出</Label></Action>
        <Action><Label $s={49} $w={700}>撤单</Label></Action>
        <Action><Label $s={49} $w={700} $c="#fbab3c">更多</Label></Action>
      </ActionBar>

      <SystemNav>
        <svg width="490" height="46" viewBox="288 2307 490 46" fill="none" stroke="#7a7a7a" strokeWidth="5" strokeLinecap="round">
          <path d="M292.500 2313.500h34M292.500 2329.500h34M292.500 2345.500h34" />
          <rect x="517" y="2311" width="37" height="37" rx="8" />
          <path d="M772.500 2312 L753 2327 Q750.500 2329.500 753 2332 L772.500 2347" />
        </svg>
      </SystemNav>
    </Screen>
  );
}
